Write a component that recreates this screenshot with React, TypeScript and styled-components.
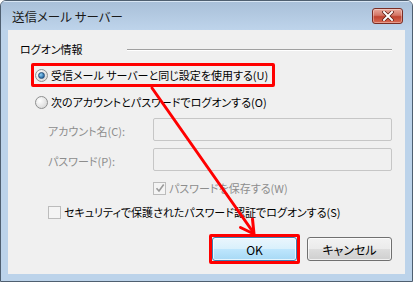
import React, { FC, ReactNode } from 'react';
import styled, { createGlobalStyle, css } from 'styled-components';

const GlobalStyle = createGlobalStyle`
  html, body {
    margin: 0;
    padding: 0;
    background: #ffffff;
  }
  body {
    font-family: "Noto Sans CJK JP", "Noto Sans", sans-serif;
    font-size: 11px;
    font-feature-settings: "palt" 1;
  }
`;

const Window = styled.div`
  position: relative;
  width: 413px;
  height: 282px;
  box-sizing: border-box;
  border: 1px solid #4f5f70;
  border-radius: 6px 6px 0 0;
  background: #bcd3ea;
  display: flex;
  flex-direction: column;
  overflow: hidden;
`;

const TitleBar = styled.div`
  height: 29px;
  display: flex;
  align-items: center;
  justify-content: space-between;
  padding: 0 9px 0 11px;
  background: linear-gradient(#a8bfd8, #bed4eb);
  box-shadow: inset 0 1px 0 #d8e6f4;
`;

const Title = styled.span`
  font-size: 12.5px;
  color: #1a1a1a;
  margin-top: 2px;
`;

const CloseButton = styled.div`
  width: 29px;
  height: 14px;
  margin-top: 1px;
  border: 1px solid #7a2d24;
  border-radius: 3px;
  background: linear-gradient(#e9a99c 0%, #d47565 45%, #c04330 55%, #d86b55 100%);
  box-shadow: inset 0 0 0 1px rgba(255, 255, 255, 0.35);
  display: flex;
  align-items: center;
  justify-content: center;
`;

const Frame = styled.div`
  flex: 1;
  padding: 0 7px 7px 7px;
  display: flex;
`;

const Panel = styled.div`
  position: relative;
  flex: 1;
  background: #f0f0f0;
  padding: 11px 13px 0 12px;
  display: flex;
  flex-direction: column;
  color: #000;
  font-size: 11px;
`;

const GroupHeader = styled.div`
  display: flex;
  align-items: center;
  height: 16px;
`;

const GroupLine = styled.div`
  margin-left: auto;
  width: 265px;
  height: 1px;
  background: #a0a0a0;
  box-shadow: 0 1px 0 #ffffff;
`;

const Row = styled.div<{ $top: number; $left: number }>`
  display: flex;
  align-items: center;
  height: 16px;
  margin-top: ${(p) => p.$top}px;
  margin-left: ${(p) => p.$left}px;
`;

const Highlight = styled.span<{ $inset: string }>`
  position: relative;
  display: inline-flex;
  align-items: center;
  &::after {
    content: '';
    position: absolute;
    inset: ${(p) => p.$inset};
    border: 3px solid #ff0000;
    border-radius: 2px;
    pointer-events: none;
  }
`;

const RadioCircle = styled.span<{ $checked?: boolean }>`
  width: 11px;
  height: 11px;
  border-radius: 50%;
  border: 1px solid #8e8f8f;
  background: radial-gradient(circle at 35% 35%, #ffffff, #d9d9d9 80%);
  display: inline-flex;
  align-items: center;
  justify-content: center;
  flex-shrink: 0;
  ${(p) =>
    p.$checked &&
    css`
      &::before {
        content: '';
        width: 5px;
        height: 5px;
        border-radius: 50%;
        background: radial-gradient(circle at 35% 35%, #8fd1f7, #1e5f9a 80%);
        border: 1px solid #24507b;
      }
    `}
`;

const Label = styled.span<{ $disabled?: boolean }>`
  margin-left: 3px;
  white-space: nowrap;
  color: ${(p) => (p.$disabled ? '#8d8d8d' : '#000')};
`;

const FieldRow = styled.div<{ $top: number }>`
  display: flex;
  align-items: center;
  margin-top: ${(p) => p.$top}px;
  margin-left: 28px;
`;

const FieldLabel = styled.span`
  width: 105px;
  color: #8d8d8d;
  padding-top: 2px;
`;

const Input = styled.div`
  width: 237px;
  height: 21px;
  border: 1px solid #c6c6c6;
  border-radius: 2px;
  background: #f0f0f0;
`;

const CheckBox = styled.span`
  width: 11px;
  height: 11px;
  border: 1px solid #bcbcbc;
  background: #f4f4f4;
  display: inline-flex;
  align-items: center;
  justify-content: center;
  flex-shrink: 0;
`;

const ButtonRow = styled.div`
  display: flex;
  justify-content: flex-end;
  gap: 10px;
  margin-top: 17px;
`;

const Button = styled.div<{ $primary?: boolean }>`
  width: 83px;
  height: 22px;
  border-radius: 3px;
  display: flex;
  align-items: center;
  justify-content: center;
  font-size: 12px;
  color: #000;
  border: 1px solid ${(p) => (p.$primary ? '#3c7fb1' : '#707070')};
  background: ${(p) =>
    p.$primary
      ? 'linear-gradient(#eaf6fd 0%, #d9f0fc 50%, #bee6fd 51%, #a7d9f5 100%)'
      : 'linear-gradient(#f2f2f2 0%, #ebebeb 50%, #dddddd 51%, #cfcfcf 100%)'};
  box-shadow: inset 0 0 0 1px rgba(255, 255, 255, 0.7);
`;

const ArrowLayer = styled.svg`
  position: absolute;
  left: 0;
  top: 0;
  pointer-events: none;
`;

const Radio: FC<{ checked?: boolean; children: ReactNode }> = ({ checked, children }) => (
  <>
    <RadioCircle $checked={checked} />
    <Label>{children}</Label>
  </>
);

const Check: FC<{ checked?: boolean }> = ({ checked }) => (
  <CheckBox>
    {checked && (
      <svg width="10" height="10" viewBox="0 0 10 10">
        <path d="M1.5 5.2 L4 8 L8.7 1.5" fill="none" stroke="#9a9a9a" strokeWidth="1.6" />
      </svg>
    )}
  </CheckBox>
);

export default function App() {
  return (
    <>
      <GlobalStyle />
      <Window>
        <TitleBar>
          <Title>送信メール サーバー</Title>
          <CloseButton>
            <svg width="12" height="10" viewBox="0 0 12 10">
              <path d="M2 1 L10 9 M10 1 L2 9" stroke="#5a1a12" strokeWidth="3.4" strokeLinecap="square" />
              <path d="M2 1 L10 9 M10 1 L2 9" stroke="#ffffff" strokeWidth="2" strokeLinecap="square" />
            </svg>
          </CloseButton>
        </TitleBar>
        <Frame>
          <Panel>
            <GroupHeader>
              <span>ログオン情報</span>
              <GroupLine />
            </GroupHeader>
            <Row $top={10} $left={15}>
              <Highlight $inset="-4px -7px -4px -4px">
                <Radio checked>受信メール サーバーと同じ設定を使用する(U)</Radio>
              </Highlight>
            </Row>
            <Row $top={11} $left={15}>
              <Radio>次のアカウントとパスワードでログオンする(O)</Radio>
            </Row>
            <FieldRow $top={8}>
              <FieldLabel>アカウント名(C):</FieldLabel>
              <Input />
            </FieldRow>
            <FieldRow $top={7}>
              <FieldLabel>パスワード(P):</FieldLabel>
              <Input />
            </FieldRow>
            <Row $top={9} $left={133}>
              <Check checked />
              <Label $disabled>パスワードを保存する(W)</Label>
            </Row>
            <Row $top={8} $left={28}>
              <Check />
              <Label>セキュリティで保護されたパスワード認証でログオンする(S)</Label>
            </Row>
            <ButtonRow>
              <Highlight $inset="-3px">
                <Button $primary>OK</Button>
              </Highlight>
              <Button>キャンセル</Button>
            </ButtonRow>
          </Panel>
        </Frame>
        <ArrowLayer width="413" height="282">
          <g stroke="#ff0000" strokeWidth="3" fill="none" strokeLinecap="round" strokeLinejoin="round">
            <line x1="151" y1="87" x2="252" y2="231" />
            <polyline points="251.5,218 253,233 239.5,226.5" />
          </g>
        </ArrowLayer>
      </Window>
    </>
  );
}
